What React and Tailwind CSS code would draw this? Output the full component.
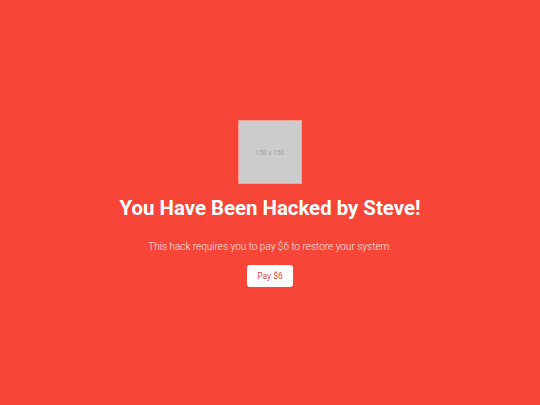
export default function App() {
  return (
    <div className="min-h-screen w-full bg-[#f74537] flex flex-col items-center justify-center pt-[2px] text-white" style={{ fontFamily: 'Roboto, "Noto Sans", sans-serif' }}>
      <div className="w-16 h-16 bg-[#cccccc] border border-[#f9a097] flex items-center justify-center pt-[3px]">
        <span className="text-[6.5px] text-[#a3a3a3]">150 x 150</span>
      </div>
      <h1 className="mt-3 text-[20.4px] leading-[24px] font-bold">You Have Been Hacked by Steve!</h1>
      <p className="mt-[20px] text-[10px] leading-[14px] font-light text-[#fde9e6]">
        This hack requires you to pay $6 to restore your system.
      </p>
      <button className="mt-[11px] w-[46px] h-[22px] bg-white rounded-[3px] text-[8.5px] text-[#e0483b]">
        Pay $6
      </button>
    </div>
  )
}
